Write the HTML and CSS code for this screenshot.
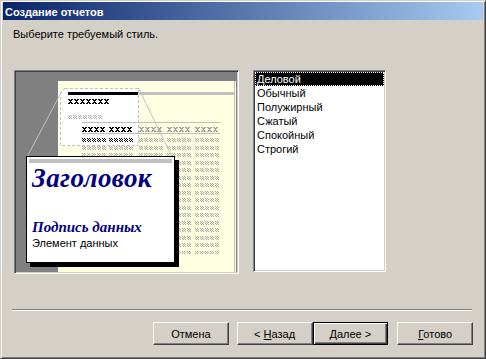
FILE: index.html
```html
<!DOCTYPE html>
<html lang="ru">
<head>
	<meta charset="UTF-8">
	<title>Создание отчетов</title>
	<link rel="stylesheet" href="styles.css">
</head>
<body>
<div class="window">
	<div class="titlebar">Создание отчетов</div>
	<div class="content">
		<p class="prompt">Выберите требуемый стиль.</p>
		<div class="main">
			<div class="preview">
				<svg class="art" width="221" height="200" viewBox="0 0 221 200" shape-rendering="crispEdges">
					<defs>
						<pattern id="bk" width="6" height="5" patternUnits="userSpaceOnUse"><path fill="#000" d="M0 0h2v1H0zM3 0h2v1H3zM1 1h3v1H1zM2 2h1v1H2zM1 3h3v1H1zM0 4h2v1H0zM3 4h2v1H3z"/></pattern>
						<pattern id="bg" width="6" height="5" patternUnits="userSpaceOnUse"><path fill="#a0a0a0" d="M0 0h2v1H0zM3 0h2v1H3zM1 1h3v1H1zM2 2h1v1H2zM1 3h3v1H1zM0 4h2v1H0zM3 4h2v1H3z"/></pattern>
						<pattern id="lk" width="5" height="4" patternUnits="userSpaceOnUse"><path fill="#000" d="M0 0h1v1H0zM2 0h1v1H2zM1 1h1v1H1zM3 1h1v1H3zM0 2h1v1H0zM2 2h1v1H2zM1 3h1v1H1zM3 3h1v1H3z"/></pattern>
						<pattern id="lg" width="5" height="4" patternUnits="userSpaceOnUse"><path fill="#b0b0b0" d="M0 0h1v1H0zM2 0h1v1H2zM1 1h1v1H1zM3 1h1v1H3zM0 2h1v1H0zM2 2h1v1H2zM1 3h1v1H1zM3 3h1v1H3z"/></pattern>
						<pattern id="col" width="5" height="15" patternUnits="userSpaceOnUse"><path fill="#a8a8a8" d="M0 0h1v1H0zM2 0h1v1H2zM1 1h1v1H1zM3 1h1v1H3zM0 2h1v1H0zM2 2h1v1H2zM1 3h1v1H1zM3 3h1v1H3zM0 8h1v1H0zM2 8h1v1H2zM1 9h1v1H1zM3 9h1v1H3zM0 10h1v1H0zM2 10h1v1H2zM1 11h1v1H1zM3 11h1v1H3z"/></pattern>
						<rect id="b4k" width="23" height="5" fill="url(#bk)"/>
						<rect id="b4g" width="23" height="5" fill="url(#bg)"/>
						<rect id="b7k" width="41" height="5" fill="url(#bk)"/>
						<rect id="l7g" width="34" height="4" fill="url(#lg)"/>
						<rect id="l5k" width="24" height="4" fill="url(#lk)"/>
						<rect id="data" width="24" height="116" fill="url(#col)"/>
					</defs>
					<rect width="221" height="200" fill="#808080"/>
					<!-- page -->
					<rect x="42" y="9" width="178" height="191" fill="#ffffe1"/>
					<rect x="42" y="9" width="178" height="1" fill="#fff"/>
					<rect x="42" y="9" width="1" height="191" fill="#fff"/>
					<rect x="218" y="9" width="1" height="191" fill="#c0c0c0"/>
					<rect x="52" y="20" width="167" height="3" fill="#c0c0c0"/>
					<!-- table -->
					<use href="#data" x="66" y="66"/>
					<use href="#data" x="93" y="66"/>
					<use href="#data" x="123" y="66"/>
					<use href="#data" x="151" y="66"/>
					<use href="#data" x="179" y="66"/>
					<use href="#b4g" x="123" y="55"/>
					<use href="#b4g" x="151" y="55"/>
					<use href="#b4g" x="179" y="55"/>
					<!-- zoomed area -->
					<polygon points="48.5,16.5 122.5,16.5 122.5,73.5 44.5,73.5 44.5,20.5" fill="#fff" stroke="#c0c0c0" stroke-dasharray="3 2"/>
					<rect x="52" y="20" width="70" height="3" fill="#000"/>
					<use href="#b7k" x="52" y="27"/>
					<use href="#l7g" x="52" y="43"/>
					<rect x="66" y="50" width="138" height="1" fill="#c0c0c0"/>
					<rect x="66" y="61" width="138" height="1" fill="#c0c0c0"/>
					<use href="#b4k" x="66" y="55"/>
					<use href="#b4k" x="93" y="55"/>
					<use href="#l5k" x="66" y="66"/>
					<use href="#l5k" x="93" y="66"/>
					<line x1="46" y1="19" x2="11" y2="85" stroke="#c0c0c0" shape-rendering="auto"/>
					<line x1="122.5" y1="16" x2="156" y2="85" stroke="#c0c0c0" shape-rendering="auto"/>
				</svg>
				<div class="card">
					<div class="card-bar"></div>
					<div class="card-title">Заголовок</div>
					<div class="card-caption">Подпись данных</div>
					<div class="card-item">Элемент данных</div>
				</div>
			</div>
			<ul class="styles">
				<li class="on">Деловой</li>
				<li>Обычный</li>
				<li>Полужирный</li>
				<li>Сжатый</li>
				<li>Спокойный</li>
				<li>Строгий</li>
			</ul>
		</div>
		<div class="sep"></div>
		<div class="buttons">
			<button class="btn cancel">Отмена</button>
			<button class="btn">&lt; <u>Н</u>азад</button>
			<button class="btn default"><u>Д</u>алее &gt;</button>
			<button class="btn finish"><u>Г</u>отово</button>
		</div>
	</div>
</div>
</body>
</html>
```

FILE: styles.css
```css
* {
	margin: 0;
	padding: 0;
	box-sizing: border-box;
}
body {
	font: 11px "Liberation Sans", Arial, sans-serif;
	color: #000;
	background: #d4d0c8;
}
.window {
	width: 486px;
	height: 359px;
	background: #d4d0c8;
	border: 1px solid;
	border-color: #d4d0c8 #404040 #404040 #d4d0c8;
	box-shadow: inset 1px 1px #fff, inset -1px -1px #808080;
	padding: 1px;
	display: flex;
	flex-direction: column;
}
.titlebar {
	height: 18px;
	margin: 0 1px;
	padding: 2px 0 0 2px;
	line-height: 16px;
	color: #fff;
	font-weight: bold;
	background: linear-gradient(to right, #0a246a, #a6caf0);
}
.content {
	padding: 0 11px 0 12px;
}
.prompt {
	margin: 8px 0 0 -1px;
	line-height: 13px;
}
.main {
	display: flex;
	align-items: flex-start;
	gap: 14px;
	margin-top: 29px;
}
.preview {
	position: relative;
	width: 225px;
	height: 204px;
	border: 1px solid;
	border-color: #808080 #fff #fff #808080;
	box-shadow: inset 1px 1px #404040, inset -1px -1px #d4d0c8;
	padding: 1px;
}
.art {
	display: block;
}
.card {
	position: absolute;
	left: 11px;
	top: 85px;
	width: 149px;
	height: 107px;
	background: #fff;
	border: 1px solid #000;
	box-shadow: 4px 4px 0 #000;
	padding: 2px 2px 0;
}
.card-bar {
	height: 4px;
	background: #c0c0c0;
}
.card-title {
	font: italic bold 27px/30px "Liberation Serif", "Times New Roman", serif;
	letter-spacing: 0.4px;
	color: #000080;
	padding-left: 3px;
}
.card-caption {
	margin-top: 25px;
	font: italic bold 15px/18px "Liberation Serif", "Times New Roman", serif;
	color: #000080;
	padding-left: 3px;
}
.card-item {
	margin-top: 1px;
	line-height: 13px;
	padding-left: 3px;
}
.styles {
	width: 133px;
	height: 202px;
	list-style: none;
	background: #fff;
	border: 1px solid;
	border-color: #808080 #fff #fff #808080;
	box-shadow: inset 1px 1px #404040, inset -1px -1px #d4d0c8;
	padding: 1px;
}
.styles li {
	line-height: 14px;
	padding-left: 2px;
}
.styles .on {
	background: #000;
	color: #fff;
	outline: 1px dotted #fff;
	outline-offset: -1px;
}
.sep {
	margin: 35px 0 0 -2px;
	width: 460px;
	border-top: 1px solid #808080;
	border-bottom: 1px solid #fff;
}
.buttons {
	display: flex;
	margin: 11px 0 0 139px;
}
.btn {
	width: 76px;
	height: 23px;
	font: inherit;
	color: #000;
	background: #d4d0c8;
	border: 1px solid;
	border-color: #fff #404040 #404040 #fff;
	box-shadow: inset -1px -1px #808080;
	text-align: center;
}
.btn u {
	text-decoration: underline;
}
.cancel {
	margin-right: 8px;
}
.finish {
	margin-left: 9px;
}
.btn.default {
	border: 1px solid #000;
	box-shadow: inset 1px 1px #fff, inset -1px -1px #404040, inset -2px -2px #808080;
}
```
